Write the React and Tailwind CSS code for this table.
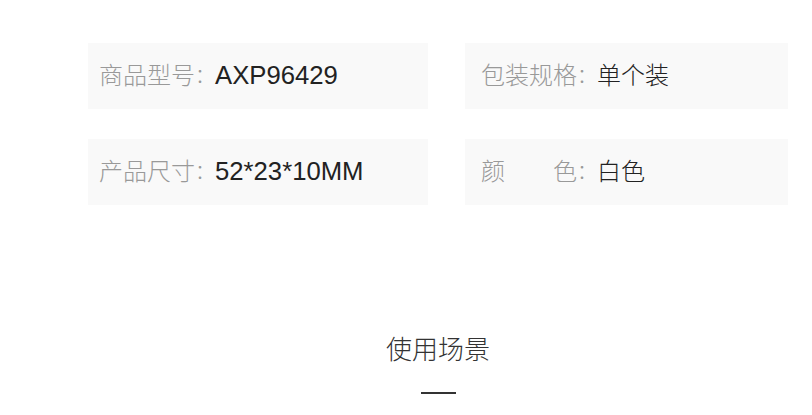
const FONT = 'font-["Liberation_Sans","Noto_Sans_CJK_SC",sans-serif]';

const specs = [
  [
    { label: '商品型号', value: 'AXP96429', latin: true },
    { label: '包装规格', value: '单个装' },
  ],
  [
    { label: '产品尺寸', value: '52*23*10MM', latin: true },
    { label: '颜色', value: '白色', spread: true },
  ],
];

function Label({ text, spread }) {
  if (spread) {
    return (
      <span className="inline-flex w-[96px] justify-between">
        {text.split('').map((ch) => <span key={ch}>{ch}</span>)}
      </span>
    );
  }
  return <span>{text}</span>;
}

function Cell({ item, right }) {
  return (
    <div className={`flex h-[66px] items-center bg-[#f9f9f9] ${right ? 'w-[323px] pl-[16px]' : 'w-[340px] pl-[11px]'}`}>
      <span className="flex items-center text-[24px] font-light leading-none text-[#999999]">
        <Label text={item.label} spread={item.spread} />
        <span className="text-[20px]">：</span>
      </span>
      <span className={`leading-none text-[#222222] ${item.latin ? 'text-[25.7px]' : 'text-[24px] font-light'}`}>
        {item.value}
      </span>
    </div>
  );
}

export default function App() {
  return (
    <div className={`h-[415px] w-[812px] overflow-hidden bg-white ${FONT}`}>
      <div className="ml-[88px] w-[700px] pt-[43px]">
        <div className="flex flex-col gap-[30px]">
          {specs.map((row, i) => (
            <div key={i} className="flex gap-[37px]">
              <Cell item={row[0]} />
              <Cell item={row[1]} right />
            </div>
          ))}
        </div>

        {/* Section title */}
        <div className="mt-[132px] flex flex-col items-center">
          <h2 className="text-[26px] font-light leading-none text-[#333333]">使用场景</h2>
          <div className="mt-[29px] h-[2px] w-[35px] bg-[#333333]" />
        </div>
      </div>
    </div>
  );
}
